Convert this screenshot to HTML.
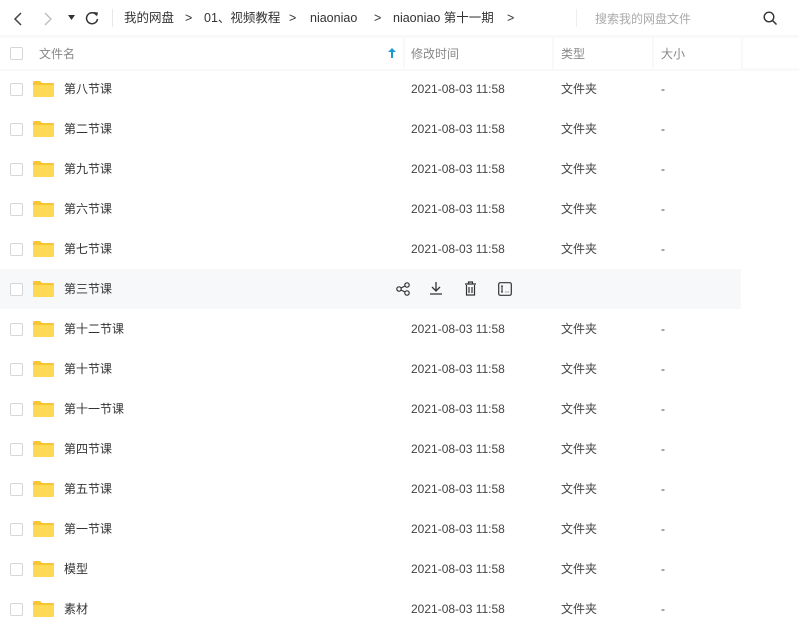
<!DOCTYPE html>
<html><head><meta charset="utf-8"><style>
*{margin:0;padding:0;box-sizing:border-box}
body{width:799px;height:641px;background:#fff;font-family:"Liberation Sans","Noto Sans CJK SC",sans-serif;color:#333;position:relative;overflow:hidden;font-size:12px;line-height:16px}
.abs{position:absolute;white-space:nowrap;line-height:16px}
.cb{position:absolute;left:10px;width:13px;height:13px;border:1px solid #d6d6d6;border-radius:2px;background:#fff}
.fold{position:absolute;left:33px;width:21px;height:16px}
.row{position:absolute;left:0;width:799px;height:40px}
.t{position:absolute;top:12px;font-size:12px;color:#444;line-height:16px;white-space:nowrap}
.hd{position:absolute;top:38px;height:31px;background:#fff}
.bc{position:absolute;top:10px;font-size:12.5px;color:#333;line-height:16px;white-space:nowrap}
</style></head><body>
<div class="abs" style="left:0;top:35px;width:799px;height:36px;background:#f8f9fa"></div>
<div class="hd" style="left:0;width:403px"></div>
<div class="hd" style="left:405px;width:147px"></div>
<div class="hd" style="left:554px;width:98px"></div>
<div class="hd" style="left:654px;width:87px"></div>
<div class="hd" style="left:743px;width:56px;height:30px"></div>
<div class="cb" style="top:47px"></div>
<div class="abs" style="left:39px;top:46px;font-size:12px;color:#888">文件名</div>
<svg class="abs" style="left:388px;top:48px" width="8" height="10"><path d="M4 0L8 4H5V10H3V4H0Z" fill="#1a9bd7"/></svg>
<div class="abs" style="left:411px;top:46px;color:#888">修改时间</div>
<div class="abs" style="left:561px;top:46px;color:#888">类型</div>
<div class="abs" style="left:661px;top:46px;color:#888">大小</div>

<svg class="abs" style="left:12px;top:11px" width="12" height="16"><path d="M9 2L3 8L9 14" stroke="#444" stroke-width="1.5" fill="none"/></svg>
<svg class="abs" style="left:42px;top:11px" width="12" height="16"><path d="M3 2L9 8L3 14" stroke="#bbb" stroke-width="1.3" fill="none"/></svg>
<svg class="abs" style="left:68px;top:15px" width="8" height="6"><path d="M0 0H7L3.5 5Z" fill="#333"/></svg>
<svg class="abs" style="left:84px;top:10px" width="16" height="16"><path d="M12.5 5A5.5 5.5 0 1 0 13.5 9" stroke="#333" stroke-width="1.5" fill="none"/><path d="M10 2L14 2.5L13 6.5Z" fill="#333"/></svg>
<div class="abs" style="left:112px;top:9px;width:1px;height:18px;background:#e8e8e8"></div>
<div class="bc" style="left:124px">我的网盘</div>
<div class="bc" style="left:185px">&gt;</div>
<div class="bc" style="left:204px">01、视频教程</div>
<div class="bc" style="left:289px">&gt;</div>
<div class="bc" style="left:310px">niaoniao</div>
<div class="bc" style="left:374px">&gt;</div>
<div class="bc" style="left:393px">niaoniao 第十一期</div>
<div class="bc" style="left:507px">&gt;</div>
<div class="abs" style="left:576px;top:9px;width:1px;height:18px;background:#eee"></div>
<div class="abs" style="left:595px;top:11px;font-size:12px;color:#aaa">搜索我的网盘文件</div>
<svg class="abs" style="left:763px;top:11px" width="15" height="15"><circle cx="6" cy="6" r="4.8" stroke="#333" stroke-width="1.4" fill="none"/><path d="M9.5 9.5L13.5 13.5" stroke="#333" stroke-width="1.5"/></svg>

<div class="abs" style="left:0;top:269px;width:741px;height:40px;background:#f7f8fa"></div>
<div id="rows"></div>
<script>
var n=["第八节课","第二节课","第九节课","第六节课","第七节课","第三节课","第十二节课","第十节课","第十一节课","第四节课","第五节课","第一节课","模型","素材"];
var h="";
for(var i=0;i<n.length;i++){var y=69+i*40;
h+='<div class="row" style="top:'+y+'px"><div class="cb" style="top:14px"></div>'+
'<svg class="fold" style="top:12px" viewBox="0 0 21 16"><path d="M0 1.5Q0 0 1.5 0H7L9 2H19.5Q21 2 21 3.5V14.5Q21 16 19.5 16H1.5Q0 16 0 14.5Z" fill="#f7c531"/><path d="M0 4H21V14.5Q21 16 19.5 16H1.5Q0 16 0 14.5Z" fill="#fdd956"/></svg>'+
'<div class="t" style="left:64px;color:#333">'+n[i]+'</div>';
if(i!=5){h+='<div class="t" style="left:411px">2021-08-03 11:58</div><div class="t" style="left:561px">文件夹</div><div class="t" style="left:661px">-</div>';}
else{h+='<svg class="abs" style="left:396px;top:13px" width="14" height="14"><circle cx="3" cy="7" r="2.2" stroke="#333" stroke-width="1.2" fill="none"/><circle cx="11" cy="3" r="2.2" stroke="#333" stroke-width="1.2" fill="none"/><circle cx="11" cy="11" r="2.2" stroke="#333" stroke-width="1.2" fill="none"/><path d="M5 6L9 4M5 8L9 10" stroke="#333" stroke-width="1.2"/></svg>'+
'<svg class="abs" style="left:429px;top:12px" width="14" height="15"><path d="M7 1V10M3 6L7 10L11 6M1 13H13" stroke="#333" stroke-width="1.3" fill="none"/></svg>'+
'<svg class="abs" style="left:464px;top:12px" width="13" height="15"><path d="M1 3H12M4.5 3V1H8.5V3M2.5 4V14H10.5V4M5 6V12M8 6V12" stroke="#333" stroke-width="1.2" fill="none"/></svg>'+
'<svg class="abs" style="left:498px;top:13px" width="14" height="14"><rect x="0.7" y="0.7" width="12.6" height="12.6" rx="1.5" stroke="#333" stroke-width="1.2" fill="none"/><path d="M4 4V10M3 4H5M3 10H5M7.5 10H8.3M9.7 10H10.5" stroke="#333" stroke-width="1.1"/></svg>';}
h+='</div>';}
document.getElementById("rows").innerHTML=h;
</script>
</body></html>
